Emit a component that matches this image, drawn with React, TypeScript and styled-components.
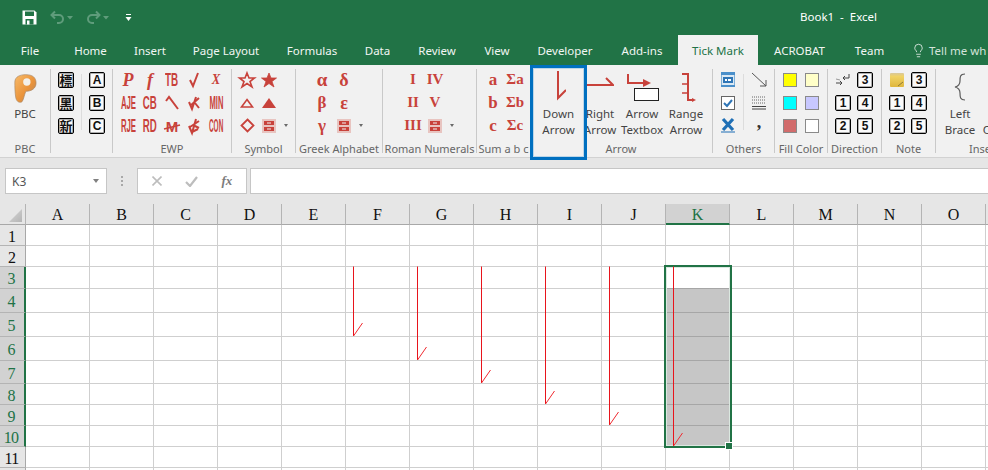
import React from 'react';
import styled, { createGlobalStyle } from 'styled-components';
import { Lightbulb } from 'lucide-react';

const GlobalStyle = createGlobalStyle`
  html, body {
    margin: 0;
    padding: 0;
    width: 988px;
    height: 470px;
    overflow: hidden;
    background: #fff;
    font-family: "Noto Sans", "Liberation Sans", sans-serif;
  }
  * { box-sizing: border-box; }
`;

const GREEN = '#217346';
const RED = '#c8423b';

/* ---------- title bar + tabs ---------- */

const TitleBar = styled.div`
  height: 35px;
  background: ${GREEN};
  display: flex;
  align-items: center;
  padding-left: 22px;
  position: relative;
`;

const QuickIcon = styled.svg<{ $gap?: number }>`
  display: block;
  margin-right: ${({ $gap }) => $gap ?? 0}px;
`;

const WindowTitle = styled.div`
  margin-left: auto;
  width: 149px;
  margin-right: 75px;
  text-align: center;
  color: #fff;
  font-size: 11.5px;
  white-space: pre;
  margin-top: -3px;
`;

const TabRow = styled.div`
  height: 30px;
  background: ${GREEN};
  display: flex;
  align-items: stretch;
`;

const Tab = styled.div<{ $w: number; $active?: boolean }>`
  width: ${({ $w }) => $w}px;
  flex: none;
  display: flex;
  align-items: center;
  justify-content: center;
  font-size: 11.5px;
  white-space: nowrap;
  color: ${({ $active }) => ($active ? GREEN : '#f1f6f3')};
  background: ${({ $active }) => ($active ? '#f1f1f1' : 'transparent')};
`;

const TellMe = styled.div`
  display: flex;
  align-items: center;
  gap: 3px;
  padding-left: 13px;
  color: #d3e3da;
  font-size: 11.5px;
  white-space: nowrap;
`;

/* ---------- ribbon ---------- */

const Ribbon = styled.div`
  height: 93px;
  background: #f1f1f1;
  border-bottom: 1px solid #d2d2d2;
  display: flex;
  padding-top: 4px;
  position: relative;
  z-index: 1;
`;

const Group = styled.div<{ $w: number; $pad?: number; $last?: boolean }>`
  width: ${({ $w }) => $w}px;
  flex: none;
  height: 84px;
  display: flex;
  flex-direction: column;
  border-right: ${({ $last }) => ($last ? 'none' : '1px solid #c9c9c9')};
  padding-left: ${({ $pad }) => $pad ?? 0}px;
  position: relative;
`;

const GroupBody = styled.div`
  height: 69px;
  display: flex;
  align-items: flex-start;
  margin-top: -1px;
`;

const GroupLabel = styled.div<{ $left?: number }>`
  position: absolute;
  left: 0;
  right: 0;
  bottom: -4px;
  height: 16px;
  line-height: 16px;
  text-align: ${({ $left }) => ($left ? 'left' : 'center')};
  padding-left: ${({ $left }) => $left ?? 0}px;
  font-size: 11px;
  color: #666;
  white-space: nowrap;
  overflow: hidden;
`;

const Col = styled.div<{ $w?: number }>`
  width: ${({ $w }) => $w ?? 22}px;
  display: flex;
  flex-direction: column;
`;

const Slot = styled.div`
  height: 23px;
  display: flex;
  align-items: center;
  justify-content: center;
  overflow: visible;
`;

const VDivider = styled.div`
  width: 1px;
  height: 56px;
  margin: 6px 4px 0;
  background: #dcdcdc;
`;

const RedText = styled.span<{ $size?: number; $sx?: number; $serif?: boolean; $italic?: boolean }>`
  display: inline-block;
  color: ${RED};
  font-family: ${({ $serif }) => ($serif ? '"Liberation Serif"' : '"Liberation Sans"')}, serif;
  font-size: ${({ $size }) => $size ?? 15}px;
  font-weight: 700;
  font-style: ${({ $italic }) => ($italic ? 'italic' : 'normal')};
  line-height: 1;
  white-space: nowrap;
  transform: scaleX(${({ $sx }) => $sx ?? 1});
`;

const BoxGlyph = styled.span<{ $cjk?: boolean }>`
  width: 16px;
  height: 16px;
  border: 1px solid #000;
  border-radius: 2px;
  box-shadow: inset 0 0 0 1px rgba(0, 0, 0, 0.3);
  display: flex;
  align-items: center;
  justify-content: center;
  color: #111;
  background: #fafafa;
  font-family: ${({ $cjk }) => ($cjk ? '"Noto Sans CJK TC"' : '"Liberation Sans"')}, sans-serif;
  font-size: ${({ $cjk }) => ($cjk ? 13 : 12)}px;
  font-weight: 700;
  line-height: 1;
`;

const Swatch = styled.span<{ $c: string }>`
  width: 14px;
  height: 14px;
  background: ${({ $c }) => $c};
  border: 1px solid #8a8a8a;
`;

const Caret = styled.span`
  width: 0;
  height: 0;
  margin-left: 2px;
  border-left: 2.5px solid transparent;
  border-right: 2.5px solid transparent;
  border-top: 3px solid #6a6a6a;
`;

const NameCaret = styled.span`
  width: 0;
  height: 0;
  border-left: 3.5px solid transparent;
  border-right: 3.5px solid transparent;
  border-top: 4px solid #808080;
`;

const LargeButton = styled.div<{ $w: number; $boxed?: boolean }>`
  width: ${({ $w }) => $w}px;
  flex: none;
  display: flex;
  flex-direction: column;
  align-items: center;
  white-space: nowrap;
  font-size: 11.5px;
  line-height: 16px;
  color: #444;
  position: relative;
  margin-top: 1px;
  ${({ $boxed }) =>
    $boxed &&
    `
    z-index: 2;
    height: 95px;
    margin-top: -3px;
    padding-top: 1px;
    background: #f1f1f1;
    border: 3px solid #0070c0;
    box-shadow: inset 0 0 0 1px #bcd6e8;
  `}
`;

const LargeIcon = styled.div`
  height: 37px;
  display: flex;
  align-items: flex-start;
  justify-content: center;
  flex: none;
`;

/* ---------- formula bar ---------- */

const FormulaBar = styled.div`
  height: 46px;
  background: #e6e6e6;
  display: flex;
  align-items: flex-start;
  padding: 10px 0 0 5px;
`;

const FieldBox = styled.div<{ $w?: number }>`
  height: 26px;
  background: #fff;
  border: 1px solid #c6c6c6;
  display: flex;
  align-items: center;
  ${({ $w }) => ($w ? `width: ${$w}px; flex: none;` : 'flex: 1; border-right: none;')}
`;

const NameBox = styled(FieldBox)`
  padding: 0 7px 0 6px;
  justify-content: space-between;
  font-size: 12px;
  color: #555;
`;

const GripDots = styled.div`
  width: 30px;
  flex: none;
  display: flex;
  flex-direction: column;
  align-items: center;
  gap: 2px;
  padding-top: 8px;
  span {
    width: 2px;
    height: 2px;
    background: #a8a8a8;
  }
`;

const FormulaButtons = styled(FieldBox)`
  margin-right: 3px;
  justify-content: space-around;
  padding: 0 2px;
`;

const FxLabel = styled.span`
  font-family: "Liberation Serif", serif;
  font-style: italic;
  font-weight: 700;
  font-size: 13px;
  color: #7c7c7c;
`;

/* ---------- sheet ---------- */

const Sheet = styled.div`
  position: relative;
  height: 266px;
  overflow: hidden;
  display: grid;
  grid-template-columns: 26px repeat(15, 64px) 64px;
  grid-template-rows: 21px 21px 21px 22px 24px 24px 24px 23px 21px 21px 21px 21px 21px;
`;

const Corner = styled.div`
  background: #e6e6e6;
  border-right: 1px solid #b4b4b4;
  border-bottom: 1px solid #a8a8a8;
  position: relative;
  &::after {
    content: '';
    position: absolute;
    right: 3px;
    bottom: 2px;
    width: 13px;
    height: 13px;
    background: linear-gradient(135deg, #d8d8d8, #b4b4b4);
    clip-path: polygon(100% 0, 100% 100%, 0 100%);
  }
`;

const ColHead = styled.div<{ $on?: boolean }>`
  font-family: "Liberation Serif", serif;
  font-size: 16px;
  display: flex;
  align-items: center;
  justify-content: center;
  padding-top: 2px;
  background: ${({ $on }) => ($on ? '#d2d2d2' : '#e6e6e6')};
  color: ${({ $on }) => ($on ? GREEN : '#111')};
  border-right: 1px solid #b4b4b4;
  border-bottom: ${({ $on }) => ($on ? `2px solid ${GREEN}` : '1px solid #a8a8a8')};
`;

const RowHead = styled.div<{ $on?: boolean }>`
  font-family: "Liberation Serif", serif;
  font-size: 16px;
  letter-spacing: -0.8px;
  display: flex;
  align-items: center;
  justify-content: center;
  padding: 3px 2px 0 0;
  background: ${({ $on }) => ($on ? '#d2d2d2' : '#e6e6e6')};
  color: ${({ $on }) => ($on ? GREEN : '#111')};
  border-right: ${({ $on }) => ($on ? `2px solid ${GREEN}` : '1px solid #a8a8a8')};
  border-bottom: 1px solid #b4b4b4;
`;

const Cell = styled.div<{ $shade?: boolean; $lineDark?: boolean }>`
  background: ${({ $shade }) => ($shade ? '#c6c6c6' : '#fff')};
  border-right: 1px solid #cfcfcf;
  border-bottom: 1px solid ${({ $lineDark }) => ($lineDark ? '#a6a6a6' : '#cfcfcf')};
`;

const ArrowLayer = styled.svg`
  position: absolute;
  left: 0;
  top: 0;
  pointer-events: none;
`;

const Selection = styled.div`
  position: absolute;
  left: 664px;
  top: 61px;
  width: 68px;
  height: 183px;
  border: 2px solid ${GREEN};
  box-shadow: inset 0 0 0 1px #dbe8e0;
  &::after {
    content: '';
    position: absolute;
    right: -2px;
    bottom: -3px;
    width: 6px;
    height: 6px;
    background: ${GREEN};
    outline: 1px solid #fff;
  }
`;

/* ---------- icons ---------- */

const SaveIcon = () => (
  <QuickIcon width="15" height="15" viewBox="0 0 15 15" $gap={13}>
    <path d="M0.5 0.5H12.5L14.5 2.5V14.5H0.5Z" fill="#fff" />
    <rect x="3" y="1.5" width="9" height="4.5" fill={GREEN} />
    <rect x="3.5" y="9" width="8" height="5.5" fill={GREEN} />
    <rect x="5" y="10.5" width="2.5" height="4" fill="#fff" />
  </QuickIcon>
);

const UndoIcon = ({ flip, gap }: { flip?: boolean; gap: number }) => (
  <>
    <QuickIcon width="15" height="15" viewBox="0 0 15 15" $gap={2}>
      <path
        d={flip ? 'M10 1.5L13.5 5L10 8.5M13.5 5H6A4 4 0 0 0 6 13H8' : 'M5 1.5L1.5 5L5 8.5M1.5 5H9A4 4 0 0 1 9 13H7'}
        fill="none"
        stroke="#5f9c7b"
        strokeWidth="2"
      />
    </QuickIcon>
    <QuickIcon width="6" height="4" viewBox="0 0 6 4" $gap={gap}>
      <path d="M0 0H6L3 3.5Z" fill="#5f9c7b" />
    </QuickIcon>
  </>
);

const CustomizeIcon = () => (
  <QuickIcon width="7" height="8" viewBox="0 0 7 8">
    <rect x="1" y="0" width="5" height="1" fill="#fff" />
    <path d="M0.5 3H6.5L3.5 7Z" fill="#fff" />
  </QuickIcon>
);

const PbcLogo = () => (
  <svg width="24" height="31" viewBox="0 0 26 32" style={{ marginTop: 4 }}>
    <defs>
      <linearGradient id="pbcGrad" x1="0" y1="0" x2="1" y2="1">
        <stop offset="0" stopColor="#f8bb6a" />
        <stop offset="0.55" stopColor="#ea933a" />
        <stop offset="1" stopColor="#a98468" />
      </linearGradient>
    </defs>
    <path
      d="M2 9C2 3 8 1 14 1C21 1 25 4 25 10C25 16 20 19 14 19C12 23 12 27 10 30C8 32 4 31 3 26C2 20 2 14 2 9Z"
      fill="url(#pbcGrad)"
      stroke="#a98562"
      strokeWidth="0.7"
    />
    <ellipse cx="15" cy="9" rx="4" ry="4" fill="#f3f0ea" />
  </svg>
);

const Ico = ({ children, w = 18, h = 18 }: { children: React.ReactNode; w?: number; h?: number }) => (
  <svg width={w} height={h} viewBox={`0 0 ${w} ${h}`} fill="none" style={{ overflow: 'visible' }}>
    {children}
  </svg>
);

const redStroke = { stroke: RED, strokeWidth: 2 };

const CaretMark = () => (
  <Ico w={14}>
    <path d="M1 7L4 3L13 15" {...redStroke} />
  </Ico>
);
const TickCross = () => (
  <Ico w={12}>
    <path d="M1 8L4 15L8 3M2 12L11 4M7 9L11 14" {...redStroke} />
  </Ico>
);
const TickDouble = () => (
  <Ico w={12}>
    <path d="M1 9L4 16L8 2M2 10L11 4M7 9L11 11M4 15L10 12" {...redStroke} />
  </Ico>
);
const CheckMark = () => (
  <Ico w={11}>
    <path d="M1 9L4 15L9 2" {...redStroke} />
  </Ico>
);
const StruckM = () => (
  <Ico w={16}>
    <text x="8" y="15" textAnchor="middle" fontFamily="Liberation Sans" fontWeight="700" fontSize="15" fill={RED}>
      M
    </text>
    <path d="M0 12L16 8" stroke={RED} strokeWidth="1.5" />
  </Ico>
);

const StarIcon = ({ solid }: { solid?: boolean }) => (
  <Ico w={16} h={16}>
    <path
      d="M8 1L10 6H15.5L11 9.5L13 15L8 11.5L3 15L5 9.5L0.5 6H6Z"
      fill={solid ? RED : 'none'}
      stroke={RED}
      strokeWidth={solid ? 0.8 : 1.6}
    />
  </Ico>
);
const TriangleIcon = ({ solid }: { solid?: boolean }) => (
  <Ico w={14} h={10}>
    <path d={solid ? 'M7 0L14 10H0Z' : 'M7 1.5L12.5 9H1.5Z'} fill={solid ? RED : 'none'} stroke={RED} strokeWidth={solid ? 0 : 1.6} />
  </Ico>
);
const DiamondIcon = () => (
  <Ico w={15} h={15}>
    <path d="M7.5 1.5L13.5 7.5L7.5 13.5L1.5 7.5Z" stroke={RED} strokeWidth="1.8" />
  </Ico>
);
const TableIcon = () => (
  <Ico w={14} h={14}>
    <rect x="0" y="0" width="14" height="14" fill="#e8c4c0" />
    <rect x="2" y="2" width="10" height="4" fill={RED} />
    <rect x="2" y="8" width="10" height="4" fill={RED} />
    <rect x="5" y="3.5" width="4" height="1" fill="#f1f1f1" />
    <rect x="5" y="9.5" width="4" height="1" fill="#f1f1f1" />
  </Ico>
);

const DownArrowIcon = () => (
  <svg width="14" height="30" viewBox="0 0 14 30" style={{ marginTop: 2 }}>
    <path d="M6 0V27L14 19" fill="none" stroke={RED} strokeWidth="2" />
  </svg>
);
const RightArrowIcon = () => (
  <svg width="28" height="30" viewBox="0 0 28 30">
    <path d="M0 16H27L20 9" fill="none" stroke={RED} strokeWidth="2" />
  </svg>
);
const ArrowTextboxIcon = () => (
  <svg width="34" height="32" viewBox="0 0 34 32">
    <path d="M3 5V14H22" fill="none" stroke={RED} strokeWidth="2" />
    <path d="M18 10L26 14L18 18Z" fill={RED} />
    <rect x="9.5" y="19.5" width="24" height="12" fill="#fff" stroke="#222" />
  </svg>
);
const RangeArrowIcon = () => (
  <svg width="20" height="33" viewBox="0 0 20 33">
    <path d="M6 5H12V31H18" fill="none" stroke={RED} strokeWidth="2" />
    <path d="M6 15H12M6 24H12" stroke={RED} strokeWidth="1.3" />
    <path d="M16 29L20 31L16 33Z" fill={RED} />
  </svg>
);
const LeftBraceIcon = () => (
  <svg width="14" height="28" viewBox="0 0 14 28" style={{ marginTop: 4 }}>
    <path d="M12 1C7 1 7 4 7 8C7 11 6 13 2 14C6 15 7 17 7 20C7 24 7 27 12 27" fill="none" stroke="#5c5c5c" strokeWidth="1.2" />
  </svg>
);

const CalendarIcon = () => (
  <Ico w={14} h={15}>
    <rect x="0.5" y="0.5" width="13" height="14" fill="#dbe9f4" stroke="#7fb0d8" />
    <rect x="0" y="0" width="14" height="3" fill="#4a8fca" />
    <rect x="2" y="5" width="10" height="6" fill="#2e75b6" />
    <rect x="4" y="7" width="2" height="2" fill="#fff" />
    <rect x="7" y="7" width="3" height="2" fill="#fff" />
    <rect x="0" y="13" width="14" height="2" fill="#4a8fca" />
  </Ico>
);
const CheckBoxIcon = () => (
  <Ico w={14} h={14}>
    <rect x="0.5" y="0.5" width="13" height="13" fill="#fff" stroke="#666" />
    <path d="M3 7L6 10L11 4" stroke="#2e75b6" strokeWidth="2" />
  </Ico>
);
const BlueCrossIcon = () => (
  <Ico w={14} h={15}>
    <path d="M2 1L12 12M12 1L2 12" stroke="#1f6fb5" strokeWidth="3.2" />
    <rect x="0" y="13.5" width="14" height="1" fill="#1f6fb5" />
  </Ico>
);
const DiagArrowIcon = () => (
  <Ico w={16} h={16}>
    <path d="M1 1L15 14M15 8V14H9" stroke="#555" strokeWidth="1" />
  </Ico>
);
const DottedIcon = () => (
  <Ico w={14} h={14}>
    <path d="M0 1H14M0 4H14M0 7H14" stroke="#666" strokeWidth="1" strokeDasharray="1 1" />
    <path d="M0 10.5H14M0 13H14" stroke="#444" strokeWidth="1" />
  </Ico>
);
const CommaMark = styled.span`
  font-family: "Liberation Serif", serif;
  font-weight: 700;
  font-size: 18px;
  line-height: 1;
  color: #333;
  margin-top: -8px;
`;
const DirectionIcon = () => (
  <Ico w={16} h={14}>
    <path d="M14 1V5H8M10 3L8 5L10 7" stroke="#444" strokeWidth="1" />
    <path d="M1 10H7M5 8L7 10L5 12" stroke="#444" strokeWidth="1" />
    <path d="M1 6L5 7" stroke="#999" strokeWidth="1" />
  </Ico>
);
const StickyNoteIcon = () => (
  <Ico w={14} h={14}>
    <defs>
      <linearGradient id="noteGrad" x1="0" y1="0" x2="0" y2="1">
        <stop offset="0" stopColor="#d9c89a" />
        <stop offset="0.25" stopColor="#f0d264" />
        <stop offset="1" stopColor="#dfb63c" />
      </linearGradient>
    </defs>
    <rect x="0" y="0" width="14" height="14" rx="1" fill="url(#noteGrad)" />
    <path d="M8 13L13 9" stroke="#8f7a35" strokeWidth="1" />
  </Ico>
);

const MiniX = () => (
  <svg width="10" height="10" viewBox="0 0 10 10">
    <path d="M0.5 0.5L9.5 9.5M9.5 0.5L0.5 9.5" stroke="#bdbdbd" strokeWidth="1.6" />
  </svg>
);
const MiniCheck = () => (
  <svg width="13" height="11" viewBox="0 0 13 11">
    <path d="M1 6L5 10L12 1" fill="none" stroke="#bdbdbd" strokeWidth="2.2" />
  </svg>
);

/* ---------- data ---------- */

const tabs: [string, number][] = [
  ['File', 60],
  ['Home', 61],
  ['Insert', 58],
  ['Page Layout', 94],
  ['Formulas', 78],
  ['Data', 53],
  ['Review', 66],
  ['View', 54],
  ['Developer', 82],
  ['Add-ins', 72],
  ['Tick Mark', 80],
  ['ACROBAT', 83],
  ['Team', 57],
];

const columns = 'ABCDEFGHIJKLMNOP'.split('');
const rowHeights = [21, 21, 22, 24, 24, 24, 23, 21, 21, 21, 21, 21];

// bottom of each leader line, in page coordinates
const leaders = [
  { x: 353, end: 336 },
  { x: 417, end: 360 },
  { x: 481, end: 383 },
  { x: 545, end: 404 },
  { x: 609, end: 425 },
  { x: 673, end: 446 },
];

const SHEET_TOP = 204;

const IconColumn = ({ items, w }: { items: React.ReactNode[]; w?: number }) => (
  <Col $w={w}>
    {items.map((item, i) => (
      <Slot key={i}>{item}</Slot>
    ))}
  </Col>
);

const Box = ({ t, cjk }: { t: string; cjk?: boolean }) => <BoxGlyph $cjk={cjk}>{t}</BoxGlyph>;
const Narrow = ({ t, sx = 0.51, size = 19 }: { t: string; sx?: number; size?: number }) => (
  <RedText $size={size} $sx={sx}>
    {t}
  </RedText>
);
const Serif = ({ t, size = 16, italic, sx }: { t: string; size?: number; italic?: boolean; sx?: number }) => (
  <RedText $serif $size={size} $italic={italic} $sx={sx}>
    {t}
  </RedText>
);

export default function App() {
  return (
    <>
      <GlobalStyle />
      <TitleBar>
        <SaveIcon />
        <UndoIcon gap={13} />
        <UndoIcon flip gap={16} />
        <CustomizeIcon />
        <WindowTitle>{'Book1  -  Excel'}</WindowTitle>
      </TitleBar>
      <TabRow>
        {tabs.map(([name, w]) => (
          <Tab key={name} $w={w} $active={name === 'Tick Mark'}>
            {name}
          </Tab>
        ))}
        <TellMe>
          <Lightbulb size={15} strokeWidth={1.2} color="#fff" />
          Tell me wh
        </TellMe>
      </TabRow>

      <Ribbon>
        <Group $w={51}>
          <GroupBody>
            <LargeButton $w={50}>
              <LargeIcon>
                <PbcLogo />
              </LargeIcon>
              PBC
            </LargeButton>
          </GroupBody>
          <GroupLabel>PBC</GroupLabel>
        </Group>

        <Group $w={62} $pad={4}>
          <GroupBody>
            <IconColumn items={[<Box t="標" cjk />, <Box t="黑" cjk />, <Box t="新" cjk />]} />
            <VDivider />
            <IconColumn items={[<Box t="A" />, <Box t="B" />, <Box t="C" />]} />
          </GroupBody>
        </Group>

        <Group $w={119} $pad={4}>
          <GroupBody>
            <IconColumn items={[<Serif t="P" size={18} italic />, <Narrow t="AJE" sx={0.41} />, <Narrow t="RJE" sx={0.41} />]} />
            <IconColumn items={[<Serif t="f" size={18} italic />, <Narrow t="CB" />, <Narrow t="RD" />]} />
            <IconColumn items={[<Narrow t="TB" sx={0.52} />, <CaretMark />, <StruckM />]} />
            <IconColumn items={[<CheckMark />, <TickCross />, <TickDouble />]} />
            <IconColumn items={[<Serif t="X" size={15} italic sx={0.85} />, <Narrow t="MIN" sx={0.4} />, <Narrow t="CON" sx={0.34} />]} />
          </GroupBody>
          <GroupLabel>EWP</GroupLabel>
        </Group>

        <Group $w={64} $pad={4}>
          <GroupBody>
            <IconColumn items={[<StarIcon />, <TriangleIcon />, <DiamondIcon />]} />
            <IconColumn items={[<StarIcon solid />, <TriangleIcon solid />, <TableIcon />]} />
            <IconColumn w={10} items={[null, null, <Caret />]} />
          </GroupBody>
          <GroupLabel>Symbol</GroupLabel>
        </Group>

        <Group $w={87} $pad={15}>
          <GroupBody>
            <IconColumn items={[<Serif t="α" size={19} />, <Serif t="β" size={17} />, <Serif t="γ" size={17} />]} />
            <IconColumn items={[<Serif t="δ" size={18} />, <Serif t="ε" size={18} />, <TableIcon />]} />
            <IconColumn w={10} items={[null, null, <Caret />]} />
          </GroupBody>
          <GroupLabel>Greek Alphabet</GroupLabel>
        </Group>

        <Group $w={94} $pad={19}>
          <GroupBody>
            <IconColumn items={[<Serif t="I" size={15} />, <Serif t="II" size={15} />, <Serif t="III" size={15} />]} />
            <IconColumn items={[<Serif t="IV" size={15} />, <Serif t="V" size={15} />, <TableIcon />]} />
            <IconColumn w={10} items={[null, null, <Caret />]} />
          </GroupBody>
          <GroupLabel>Roman Numerals</GroupLabel>
        </Group>

        <Group $w={53} $pad={5} $last>
          <GroupBody>
            <IconColumn items={[<Serif t="a" size={17} />, <Serif t="b" size={17} />, <Serif t="c" size={17} />]} />
            <IconColumn items={[<Serif t="Σa" size={15} />, <Serif t="Σb" size={15} />, <Serif t="Σc" size={15} />]} />
          </GroupBody>
          <GroupLabel>Sum a b c</GroupLabel>
        </Group>

        <Group $w={183}>
          <GroupBody>
            <LargeButton $w={57} $boxed>
              <LargeIcon>
                <DownArrowIcon />
              </LargeIcon>
              <span>Down</span>
              <span>Arrow</span>
            </LargeButton>
            <LargeButton $w={26}>
              <LargeIcon>
                <RightArrowIcon />
              </LargeIcon>
              <span>Right</span>
              <span>Arrow</span>
            </LargeButton>
            <LargeButton $w={58}>
              <LargeIcon>
                <ArrowTextboxIcon />
              </LargeIcon>
              <span>Arrow</span>
              <span>Textbox</span>
            </LargeButton>
            <LargeButton $w={30}>
              <LargeIcon>
                <RangeArrowIcon />
              </LargeIcon>
              <span>Range</span>
              <span>Arrow</span>
            </LargeButton>
          </GroupBody>
          <GroupLabel>Arrow</GroupLabel>
        </Group>

        <Group $w={62} $pad={4}>
          <GroupBody>
            <IconColumn items={[<CalendarIcon />, <CheckBoxIcon />, <BlueCrossIcon />]} />
            <VDivider />
            <IconColumn items={[<DiagArrowIcon />, <DottedIcon />, <CommaMark>,</CommaMark>]} />
          </GroupBody>
          <GroupLabel>Others</GroupLabel>
        </Group>

        <Group $w={53} $pad={4}>
          <GroupBody>
            <IconColumn items={[<Swatch $c="#ffff00" />, <Swatch $c="#00ffff" />, <Swatch $c="#d26c6c" />]} />
            <IconColumn items={[<Swatch $c="#ffffc8" />, <Swatch $c="#c8c8ff" />, <Swatch $c="#ffffff" />]} />
          </GroupBody>
          <GroupLabel>Fill Color</GroupLabel>
        </Group>

        <Group $w={54} $pad={4}>
          <GroupBody>
            <IconColumn items={[<DirectionIcon />, <Box t="1" />, <Box t="2" />]} />
            <IconColumn items={[<Box t="3" />, <Box t="4" />, <Box t="5" />]} />
          </GroupBody>
          <GroupLabel>Direction</GroupLabel>
        </Group>

        <Group $w={54} $pad={4}>
          <GroupBody>
            <IconColumn items={[<StickyNoteIcon />, <Box t="1" />, <Box t="2" />]} />
            <IconColumn items={[<Box t="3" />, <Box t="4" />, <Box t="5" />]} />
          </GroupBody>
          <GroupLabel>Note</GroupLabel>
        </Group>

        <Group $w={53} $last>
          <GroupBody>
            <LargeButton $w={48}>
              <LargeIcon>
                <LeftBraceIcon />
              </LargeIcon>
              <span>Left</span>
              <span>Brace</span>
            </LargeButton>
            <LargeButton $w={5}>
              <LargeIcon />
              <span>&nbsp;</span>
              <span>C</span>
            </LargeButton>
          </GroupBody>
          <GroupLabel $left={33}>Inse</GroupLabel>
        </Group>
      </Ribbon>

      <FormulaBar>
        <NameBox $w={102}>
          K3
          <NameCaret />
        </NameBox>
        <GripDots>
          <span />
          <span />
          <span />
        </GripDots>
        <FormulaButtons $w={110}>
          <MiniX />
          <MiniCheck />
          <FxLabel>fx</FxLabel>
        </FormulaButtons>
        <FieldBox />
      </FormulaBar>

      <Sheet>
        <Corner />
        {columns.map((c) => (
          <ColHead key={c} $on={c === 'K'}>
            {c}
          </ColHead>
        ))}
        {rowHeights.map((_, r) => {
          const rowNo = r + 1;
          const on = rowNo >= 3 && rowNo <= 10;
          return (
            <React.Fragment key={rowNo}>
              <RowHead $on={on}>{rowNo}</RowHead>
              {columns.map((c) => (
                <Cell
                  key={c}
                  $shade={c === 'K' && rowNo >= 4 && rowNo <= 10}
                  $lineDark={c === 'K' && rowNo >= 3 && rowNo <= 9}
                />
              ))}
            </React.Fragment>
          );
        })}
        <Selection />
        <ArrowLayer width="988" height="266">
          {leaders.map(({ x, end }) => (
            <g key={x} transform={`translate(${x + 0.5} ${-SHEET_TOP})`}>
              <path d={`M0 ${SHEET_TOP + 62.5}V${end}`} stroke="#e8141c" strokeWidth="1" fill="none" />
              <path d={`M0 ${end}L9 ${end - 13}`} stroke="#f02a30" strokeWidth="1" fill="none" />
            </g>
          ))}
        </ArrowLayer>
      </Sheet>
    </>
  );
}
